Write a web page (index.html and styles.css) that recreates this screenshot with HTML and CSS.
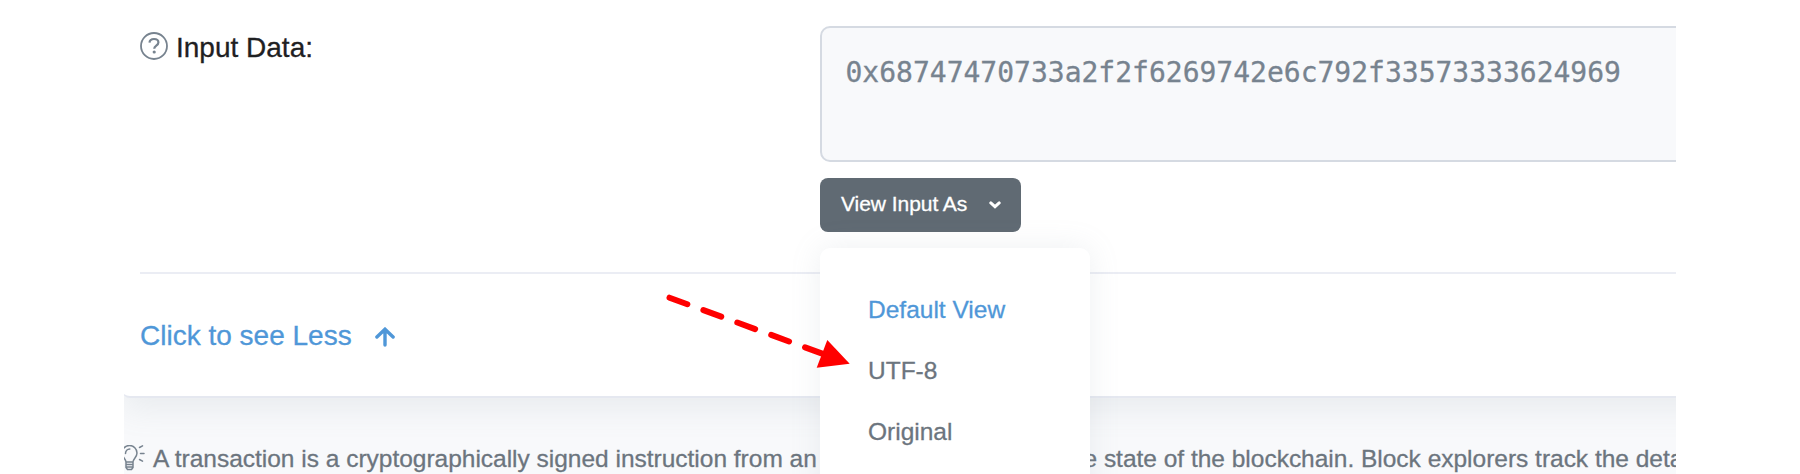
FILE: index.html
```html
<!DOCTYPE html>
<html lang="en">
<head>
<meta charset="utf-8">
<title>Transaction Details</title>
<link rel="stylesheet" href="styles.css">
</head>
<body>
<main class="page">
  <section class="card">
    <div class="row">
      <div class="label">
        <svg class="help" viewBox="0 0 28 28" fill="none" stroke="#77838f"><circle cx="14" cy="14" r="13" stroke-width="1.8"/><path d="M9.500 10.600C9.700 8.200 11.500 7 14 7c2.600 0 4.400 1.300 4.400 3.500 0 3.200-4.200 3.200-4.200 6.300" stroke-width="2.200"/><circle cx="14.200" cy="20" r="1.600" fill="#77838f" stroke="none"/></svg>
        <span>Input Data:</span>
      </div>
      <div class="value">
        <div class="data-box">0x68747470733a2f2f6269742e6c792f33573333624969</div>
        <div class="dropdown">
          <button class="btn">View Input As
            <svg class="chevron" viewBox="0 0 12 8"><path d="M1.800 1.900 6 5.700l4.200-3.800" fill="none" stroke="#fff" stroke-width="3" stroke-linecap="round"/></svg>
          </button>
          <div class="menu">
            <a class="item active">Default View</a>
            <a class="item">UTF-8</a>
            <a class="item">Original</a>
          </div>
        </div>
      </div>
    </div>
    <div class="less">
      <span>Click to see Less</span>
      <svg class="up" viewBox="0 0 20 20" fill="none" stroke="#4f97d8" stroke-width="3.400" stroke-linecap="round"><path d="M10 18V2.400M1.900 10 10 2.200l8.100 7.800"/></svg>
    </div>
  </section>
  <footer class="note">
    <svg class="bulb" viewBox="0 0 26 26" fill="none" stroke="#77838f" stroke-width="1.500" stroke-linecap="round"><path d="M5 17C4.500 13.500 1 12 1 8a7.500 7.500 0 0 1 15 0c0 4-3.500 5.500-4 9zM5 17v5.500l1.500 2h4L12 22.500V17M5 19.500h7M5 22h7M4.500 8.500a4.500 4.500 0 0 1 4.300-4.500M18.500 2.500l3-1.600M19.500 8.500h3.500M18.500 14.500l3 1.600"/></svg>
    <span class="note-text">A transaction is a cryptographically signed instruction from an account that changes the state of the blockchain. Block explorers track the details of all transactions in the network.</span>
  </footer>
  <svg class="pointer" viewBox="0 0 200 100"><path d="M9.500 7.700 175 68.300" fill="none" stroke="red" stroke-width="6" stroke-linecap="round" stroke-dasharray="19 17.100"/><path d="M189.700 73.700 167.300 50 156.700 77.700z" fill="red"/></svg>
</main>
</body>
</html>
```

FILE: styles.css
```css
body {
  margin: 0;
  background: #fff;
  font-family: "Liberation Sans", Arial, sans-serif;
  -webkit-text-stroke: 0.3px currentColor;
}

.page {
  position: relative;
  display: flex;
  flex-direction: column;
  width: 1552px;
  height: 474px;
  margin-left: 124px;
  overflow: hidden;
  background: #f8f9fb;
}

.card {
  box-sizing: border-box;
  flex: none;
  height: 398px;
  padding: 26px 0 0 18px;
  margin: 0 -40px 0 -2px;
  background: #fff;
  border-bottom: 2px solid #e5e8f0;
  border-bottom-left-radius: 8px;
  box-shadow: 0 12px 30px rgba(140, 152, 164, 0.13);
}

.row {
  display: flex;
  box-sizing: border-box;
  height: 248px;
  border-bottom: 2px solid #ebedf4;
}

.label {
  display: flex;
  gap: 8px;
  width: 680px;
  height: 44px;
  font-size: 28px;
  line-height: 43px;
  color: #1e2022;
}

.help {
  width: 28px;
  height: 28px;
  margin-top: 6px;
}

.value {
  flex: 1;
}

.data-box {
  box-sizing: border-box;
  height: 136px;
  padding: 24px 23.5px;
  border: 2px solid #d5dae2;
  border-radius: 10px;
  background: #f8f9fb;
  color: #77838f;
  font: 28px/42px "DejaVu Sans Mono", monospace;
}

.dropdown {
  position: relative;
  width: 201px;
  margin-top: 16px;
}

.btn {
  display: flex;
  align-items: center;
  justify-content: space-between;
  width: 201px;
  height: 54px;
  padding: 0 20px 2px 21px;
  border: 0;
  border-radius: 8px;
  background: #606a73;
  color: #fff;
  font: 21px/30px "Liberation Sans", Arial, sans-serif;
  letter-spacing: -0.05px;
}

.chevron {
  width: 12px;
  height: 8px;
  margin-top: 2px;
}

.menu {
  position: absolute;
  z-index: 2;
  top: 70px;
  left: 0;
  box-sizing: border-box;
  width: 270px;
  height: 260px;
  padding: 31px 0 0 48px;
  border-radius: 10px;
  background: #fff;
  box-shadow: 0 0 30px rgba(140, 152, 170, 0.15);
}

.item {
  display: block;
  font-size: 24.5px;
  line-height: 61px;
  color: #6c757e;
}

.active {
  color: #4f97d8;
}

.less {
  display: flex;
  align-items: center;
  gap: 23.5px;
  height: 124px;
  color: #4f97d8;
  font-size: 28px;
}

.up {
  width: 20px;
  height: 20px;
  margin-top: 2px;
}

.note {
  display: flex;
  gap: 6px;
  padding-top: 44px;
  margin-left: -3px;
  color: #6c757e;
  font-size: 24.5px;
  line-height: 34px;
  letter-spacing: -0.012px;
  white-space: nowrap;
}

.bulb {
  flex: none;
  width: 26px;
  height: 26px;
  margin-top: 3px;
}

.pointer {
  position: absolute;
  z-index: 3;
  top: 290px;
  left: 536px;
  width: 200px;
  height: 100px;
}
```
